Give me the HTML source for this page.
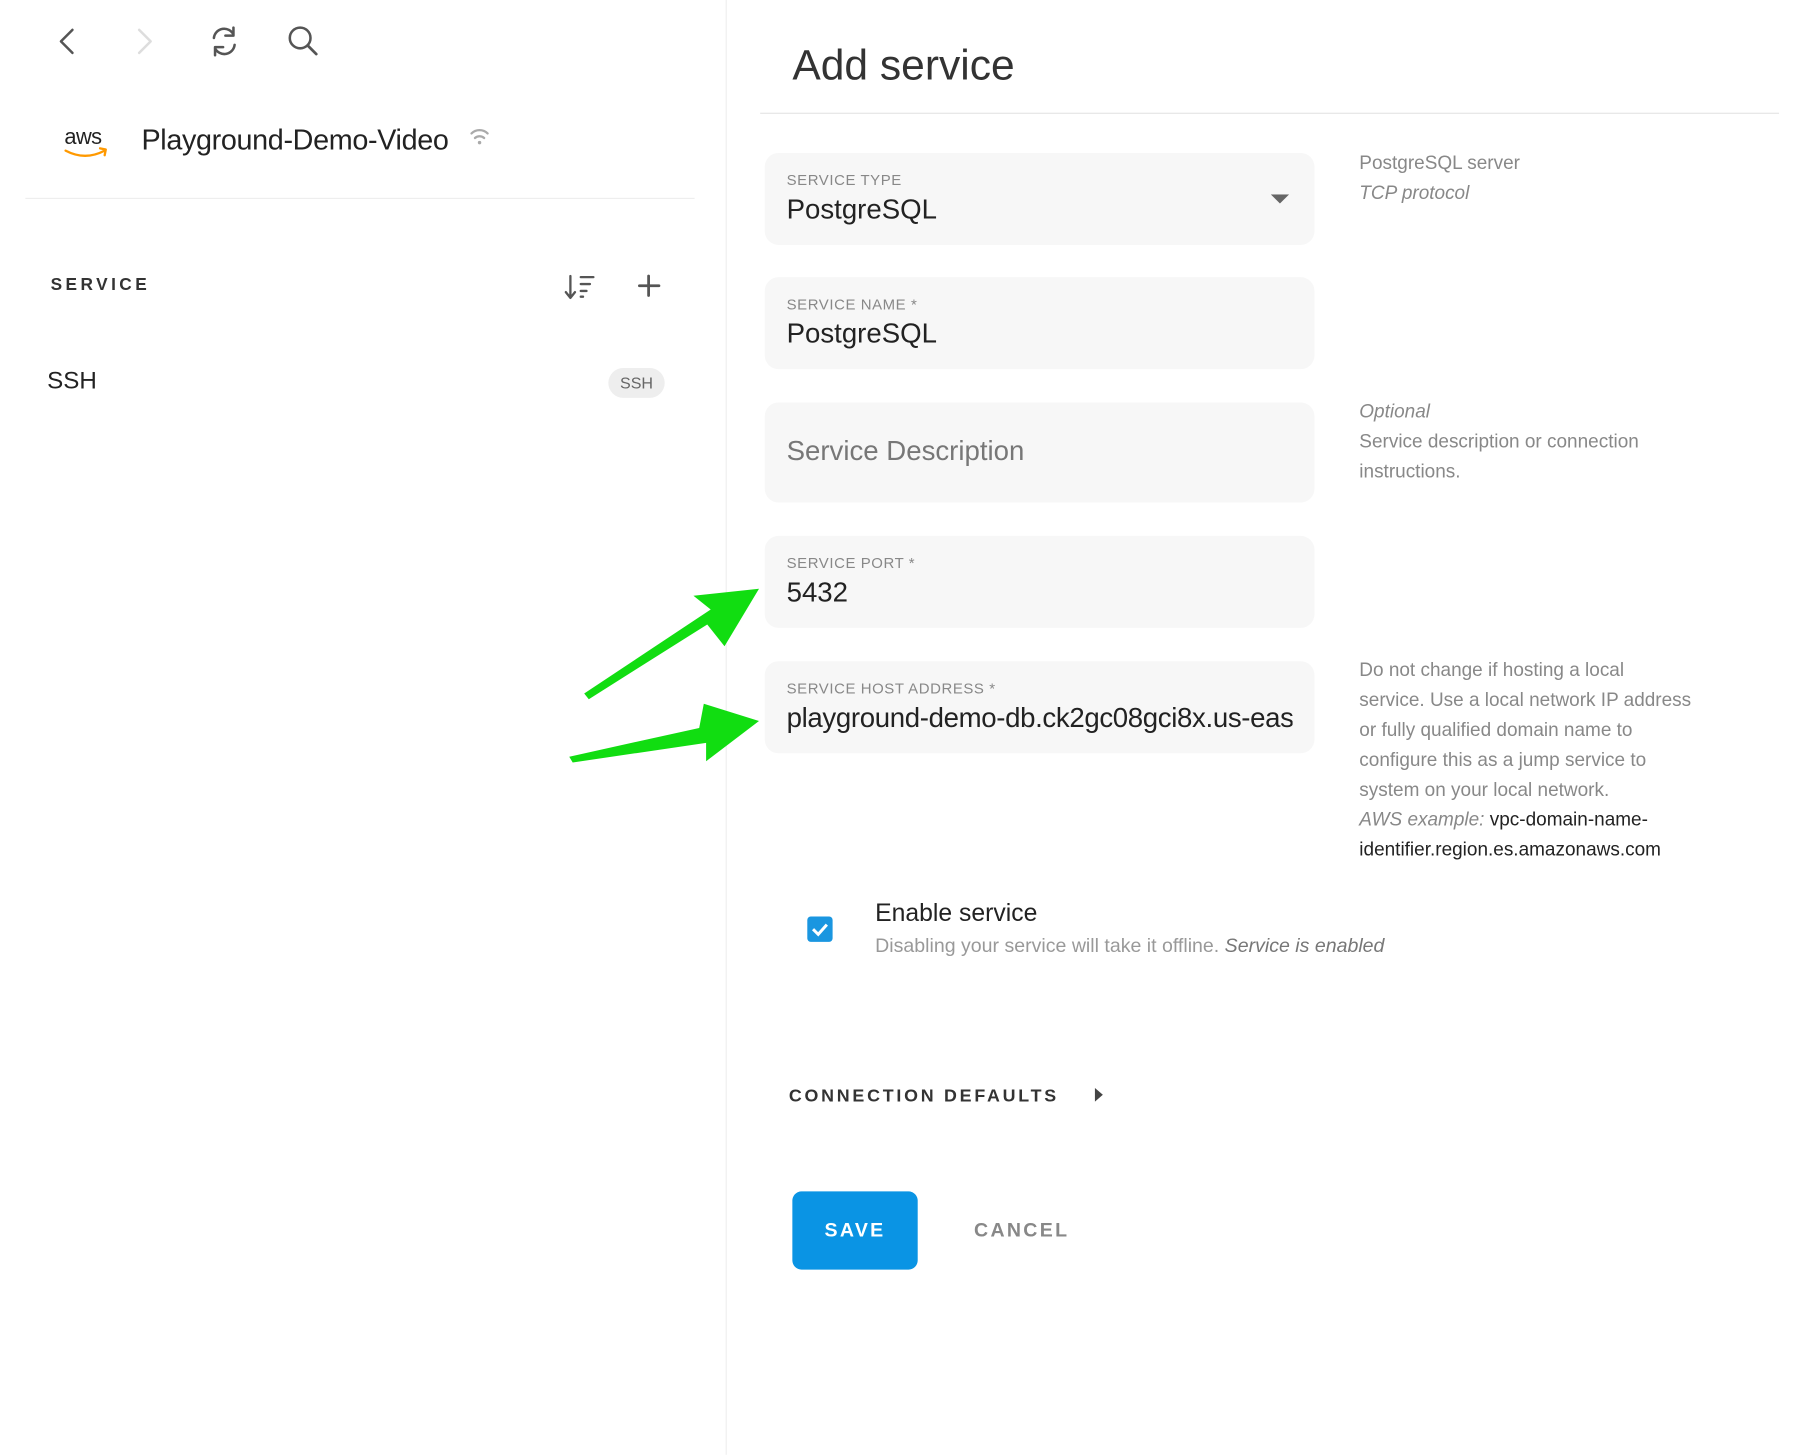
<!DOCTYPE html>
<html><head><meta charset="utf-8"><style>
html,body{margin:0;padding:0;background:#fff;width:1794px;height:1454px;overflow:hidden}
#w{position:absolute;left:0;top:0;width:1560px;height:1265px;transform:scale(1.15);transform-origin:0 0;font-family:"Liberation Sans",sans-serif;color:#222}
.a{position:absolute;white-space:nowrap}
.f{position:absolute;left:665px;width:478px;background:#f7f7f7;border-radius:12px}
.lb{position:absolute;left:19px;top:16px;font-size:13px;color:#888;letter-spacing:.5px}
.v{position:absolute;left:19px;top:36px;font-size:24px;color:#222;white-space:nowrap}
.h{position:absolute;left:1182px;font-size:16.5px;color:#888;line-height:26px;white-space:nowrap}
</style></head><body><div id="w">
<svg class="a" style="left:0;top:0" width="640" height="360" fill="none" stroke-linecap="round" stroke-linejoin="round">
<path d="M63 26 L53 36 L63 46" stroke="#555" stroke-width="2.2"/>
<path d="M121 26 L131 36 L121 46" stroke="#ddd" stroke-width="2.2"/>
<path d="M186 33 A9 9 0 0 1 203 30 M203 24 V31 H196 M204 39 A9 9 0 0 1 187 42 M187 48 V41 H194" stroke="#555" stroke-width="2.2"/>
<circle cx="261" cy="33" r="9" stroke="#555" stroke-width="2.2"/><path d="M268 40 L275 47" stroke="#555" stroke-width="2.4"/>
<path d="M410 116 A10 10 0 0 1 424 116 M413 120 A6 6 0 0 1 421 120" stroke="#aaa" stroke-width="2"/><circle cx="417" cy="124" r="1.5" fill="#aaa"/>
<path d="M496 240 V258 M492 254 L496 259 L500 254 M505 241 H516 M505 247 H513 M505 253 H510 M505 258 H507" stroke="#555" stroke-width="2"/>
<path d="M564 240 V257 M556 248.5 H573" stroke="#555" stroke-width="2.4"/>
<path d="M57 131 Q74 140 91 131 M87 129 L92 130 L91 135" stroke="#f90" stroke-width="2"/>
</svg>
<div class="a" style="left:56px;top:109px;font-size:19px;color:#222;letter-spacing:-0.5px">aws</div>
<div class="a" style="left:123px;top:108px;font-size:25px;letter-spacing:-0.3px">Playground-Demo-Video</div>
<div class="a" style="left:22px;top:172px;width:582px;height:1px;background:#eee"></div>
<div class="a" style="left:44px;top:239px;font-size:15px;font-weight:bold;letter-spacing:3px;color:#333">SERVICE</div>
<div class="a" style="left:41px;top:320px;font-size:21px">SSH</div>
<div class="a" style="left:529px;top:320px;width:49px;height:26px;border-radius:13px;background:#eee;font-size:14px;color:#666;text-align:center;line-height:26px">SSH</div>
<div class="a" style="left:631px;top:0;width:1px;height:1265px;background:#eee"></div>
<div class="a" style="left:689px;top:36px;font-size:37px;color:#333">Add service</div>
<div class="a" style="left:661px;top:98px;width:886px;height:1px;background:#e4e4e4"></div>
<div class="f" style="top:133px;height:80px"><div class="lb">SERVICE TYPE</div><div class="v">PostgreSQL</div>
<svg style="position:absolute;left:440px;top:36px" width="16" height="10"><path d="M0 0 H16 L8 8Z" fill="#666"/></svg></div>
<div class="f" style="top:241px;height:80px"><div class="lb">SERVICE NAME *</div><div class="v">PostgreSQL</div></div>
<div class="f" style="top:350px;height:87px"><div class="v" style="top:29px;color:#777">Service Description</div></div>
<div class="f" style="top:466px;height:80px"><div class="lb">SERVICE PORT *</div><div class="v">5432</div></div>
<div class="f" style="top:575px;height:80px;overflow:hidden"><div class="lb">SERVICE HOST ADDRESS *</div><div class="v" style="width:440px;overflow:hidden;letter-spacing:-0.3px">playground-demo-db.ck2gc08gci8x.us-east-1</div></div>
<div class="h" style="top:129px">PostgreSQL server<br><i>TCP protocol</i></div>
<div class="h" style="top:345px"><i>Optional</i><br>Service description or connection<br>instructions.</div>
<div class="h" style="top:570px">Do not change if hosting a local<br>service. Use a local network IP address<br>or fully qualified domain name to<br>configure this as a jump service to<br>system on your local network.<br><i>AWS example:</i> <span style="color:#222">vpc-domain-name-<br>identifier.region.es.amazonaws.com</span></div>
<div class="a" style="left:702px;top:797px;width:22px;height:22px;border-radius:3px;background:#1a96e0"></div>
<svg class="a" style="left:702px;top:797px" width="22" height="22"><path d="M5 11 L9.5 15.5 L17 7" stroke="#fff" stroke-width="2.6" fill="none"/></svg>
<div class="a" style="left:761px;top:782px;font-size:21.5px">Enable service</div>
<div class="a" style="left:761px;top:813px;font-size:17px;color:#999">Disabling your service will take it offline. <i style="color:#777">Service is enabled</i></div>
<div class="a" style="left:686px;top:945px;font-size:15.5px;font-weight:bold;letter-spacing:2.4px;color:#333">CONNECTION DEFAULTS</div>
<svg class="a" style="left:952px;top:946px" width="8" height="12"><path d="M0 0 L7 6 L0 12Z" fill="#444"/></svg>
<div class="a" style="left:689px;top:1036px;width:109px;height:68px;border-radius:8px;background:#0a94e4;color:#fff;font-size:17px;font-weight:bold;letter-spacing:2px;text-align:center;line-height:68px">SAVE</div>
<div class="a" style="left:847px;top:1060px;font-size:17px;font-weight:bold;letter-spacing:2px;color:#888">CANCEL</div>
<svg class="a" style="left:0;top:0" width="700" height="700">
<polygon points="508,603 512,608 615,543 630,562 660,512 603,518 618,530" fill="#11dd11"/>
<polygon points="495,658 498,663 614,646 614,662 660,627 612,612 608,633" fill="#11dd11"/>
</svg>
</div></body></html>
